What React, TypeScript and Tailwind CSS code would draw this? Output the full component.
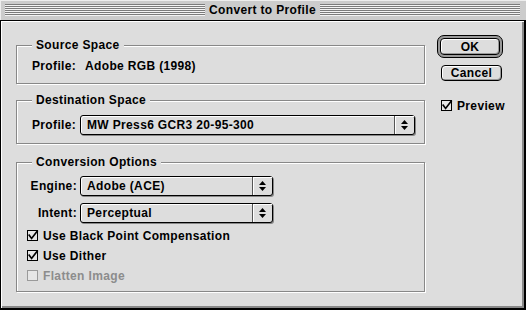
import React from 'react';

function CheckBox({ checked, disabled }: { checked?: boolean; disabled?: boolean }) {
  const stroke = disabled ? '#9a9a9a' : '#000000';
  return (
    <svg width="12" height="12" viewBox="0 0 12 12" className="shrink-0">
      <rect x="0.5" y="0.5" width="10" height="10" fill="#e6e6e6" stroke={stroke} />
      {checked && (
        <path
          d="M2.2 5.2 L4.6 8.4 L10.2 1.2"
          fill="none"
          stroke="#000000"
          strokeWidth="1.7"
          strokeLinecap="square"
        />
      )}
    </svg>
  );
}

function Popup({ text, className }: { text: string; className: string }) {
  return (
    <div
      className={`flex h-[20px] rounded-[3px] border border-black bg-[#dddddd] shadow-[inset_1px_1px_0_#ffffff,1px_1px_0_#888888] ${className}`}
    >
      <span className="flex-1 pl-[6px] leading-[18px] whitespace-nowrap">{text}</span>
      <span className="flex w-[20px] items-center justify-center border-l border-[#555555] shadow-[inset_1px_1px_0_#ffffff]">
        <svg width="7" height="10" viewBox="0 0 7 10">
          <polygon points="3.5,0 7,4 0,4" fill="#000000" />
          <polygon points="0,6 7,6 3.5,10" fill="#000000" />
        </svg>
      </span>
    </div>
  );
}

const stripes =
  'flex-1 h-[12px] bg-[repeating-linear-gradient(to_bottom,#7c7c7c_0px,#7c7c7c_1px,#f4f4f4_1px,#f4f4f4_2px)]';

const groupBox =
  'm-0 min-w-0 border border-[#888888] shadow-[inset_1px_1px_0_#ffffff,1px_1px_0_#ffffff]';

export default function App() {
  return (
    <div className="flex h-[310px] w-[526px] flex-col bg-[#dddddd] font-[family-name:Liberation_Sans,Arial,sans-serif] text-[12px] font-bold leading-[14px] tracking-[0.35px] text-black">
      {/* Title bar */}
      <div className="flex h-[21px] shrink-0 items-center border-b border-black bg-[#cccccc] pl-[5px] pr-[6px] shadow-[inset_1px_1px_0_#eeeeee]">
        <div className={stripes} />
        <span className="px-[4px] whitespace-nowrap">Convert to Profile</span>
        <div className={stripes} />
      </div>

      {/* Body */}
      <div className="flex flex-1 border-b-2 border-l border-r-2 border-black pl-[15px] pt-[14px] shadow-[inset_1px_1px_0_#ffffff,inset_-2px_-2px_0_#888888]">
        <div className="flex w-[409px] flex-col pt-[3px]">
          {/* Source Space */}
          <fieldset className={`${groupBox} pb-[10px] pl-[15px] pt-[7px]`}>
            <legend className="bg-[#dddddd] px-[4px]">Source Space</legend>
            <div className="flex">
              <span className="w-[45px]">Profile:</span>
              <span className="ml-[8px]">Adobe RGB (1998)</span>
            </div>
          </fieldset>

          {/* Destination Space */}
          <fieldset className={`${groupBox} mt-[9px] pb-[8px] pl-[15px] pt-[8px]`}>
            <legend className="bg-[#dddddd] px-[4px]">Destination Space</legend>
            <div className="flex items-center">
              <span className="w-[45px]">Profile:</span>
              <Popup text="MW Press6 GCR3 20-95-300" className="ml-[3px] w-[335px]" />
            </div>
          </fieldset>

          {/* Conversion Options */}
          <fieldset className={`${groupBox} mt-[11px] pb-[5px] pl-[10px] pt-[7px]`}>
            <legend className="ml-[5px] bg-[#dddddd] px-[4px]">Conversion Options</legend>
            <div className="flex items-center">
              <span className="w-[50px] text-right">Engine:</span>
              <Popup text="Adobe (ACE)" className="ml-[3px] w-[193px]" />
            </div>
            <div className="mt-[7px] flex items-center">
              <span className="w-[50px] text-right">Intent:</span>
              <Popup text="Perceptual" className="ml-[3px] w-[193px]" />
            </div>
            <div className="mt-[3px] flex flex-col">
              <label className="flex h-[20px] items-center gap-[4px]">
                <CheckBox checked />
                <span>Use Black Point Compensation</span>
              </label>
              <label className="flex h-[20px] items-center gap-[4px]">
                <CheckBox checked />
                <span>Use Dither</span>
              </label>
              <label className="flex h-[20px] items-center gap-[4px] text-[#8c8c8c]">
                <CheckBox disabled />
                <span>Flatten Image</span>
              </label>
            </div>
          </fieldset>
        </div>

        {/* Buttons */}
        <div className="ml-[12px] flex flex-col items-start">
          <div className="h-[23px] w-[66px] rounded-[7px] border border-black bg-[#999999] p-[2px]">
            <button className="flex h-full w-full items-center justify-center rounded-[4px] border border-black bg-[#dddddd] shadow-[inset_1px_1px_0_#ffffff,inset_-1px_-1px_0_#999999]">
              OK
            </button>
          </div>
          <button className="ml-[4px] mt-[7px] flex h-[16px] w-[61px] items-center justify-center rounded-[4px] border border-black bg-[#dddddd] shadow-[inset_1px_1px_0_#ffffff,inset_-1px_-1px_0_#999999]">
            Cancel
          </button>
          <label className="ml-[4px] mt-[18px] flex h-[14px] items-center gap-[4px]">
            <CheckBox checked />
            <span>Preview</span>
          </label>
        </div>
      </div>
    </div>
  );
}
